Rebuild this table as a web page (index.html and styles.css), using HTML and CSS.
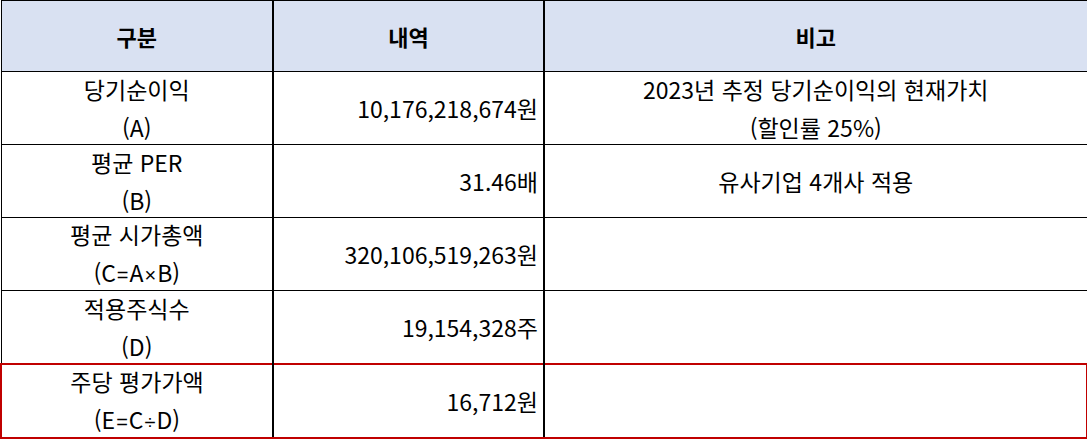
FILE: index.html
```html
<!DOCTYPE html>
<html lang="ko">
<head>
<meta charset="utf-8">
<link rel="stylesheet" href="styles.css">
</head>
<body>
<table class="grid">
  <colgroup>
    <col class="c1"><col class="c2"><col class="c3">
  </colgroup>
  <thead>
    <tr class="head">
      <th>구분</th>
      <th class="mid">내역</th>
      <th>비고</th>
    </tr>
  </thead>
  <tbody>
    <tr>
      <td class="label"><div class="two"><span>당기순이익</span><span>(A)</span></div></td>
      <td class="num mid">10,176,218,674원</td>
      <td class="note"><div class="two"><span>2023년 추정 당기순이익의 현재가치</span><span>(할인률 25%)</span></div></td>
    </tr>
    <tr>
      <td class="label"><div class="two"><span>평균 PER</span><span>(B)</span></div></td>
      <td class="num mid">31.46배</td>
      <td class="note">유사기업 4개사 적용</td>
    </tr>
    <tr>
      <td class="label"><div class="two"><span>평균 시가총액</span><span>(C<span class="op">=</span>A<span class="op">×</span>B)</span></div></td>
      <td class="num mid">320,106,519,263원</td>
      <td class="note"></td>
    </tr>
    <tr>
      <td class="label"><div class="two"><span>적용주식수</span><span>(D)</span></div></td>
      <td class="num mid">19,154,328주</td>
      <td class="note"></td>
    </tr>
    <tr class="total">
      <td class="label"><div class="two"><span>주당 평가가액</span><span>(E<span class="op">=</span>C<span class="op">÷</span>D)</span></div></td>
      <td class="num mid">16,712원</td>
      <td class="note"></td>
    </tr>
  </tbody>
</table>
</body>
</html>
```
FILE: styles.css
```css
html, body {
  margin: 0;
  padding: 0;
  background: #ffffff;
}
body {
  font-family: "Noto Sans CJK KR", "Noto Sans", sans-serif;
  color: #000000;
}
.grid {
  border-collapse: collapse;
  table-layout: fixed;
  width: 1086px;
}
.c1 { width: 272px; }
.c2 { width: 271px; }
.c3 { width: 543px; }
.grid th,
.grid td {
  border: 1px solid #000000;
  padding: 0;
  height: 72px;
  vertical-align: middle;
  font-size: 23px;
  line-height: 30px;
  font-weight: 400;
  overflow: hidden;
}
.two {
  display: flex;
  flex-direction: column;
  align-items: center;
  justify-content: center;
  gap: 8px;
  height: 72px;
}
.op {
  font-family: "Liberation Sans", sans-serif;
  font-size: 20px;
  padding: 0 1px;
}
.grid .mid {
  border-left: 2px solid #000000;
  border-right: 2px solid #000000;
}
.head th {
  background: #D9E1F2;
  font-weight: 700;
  font-size: 22px;
  text-align: center;
  height: 70px;
}
.label { text-align: center; }
.note { text-align: center; }
.num {
  text-align: right;
  padding-right: 5px !important;
}
.total td {
  border-top: 2px solid #C00000;
  border-bottom: 2px solid #C00000;
}
.total td.label { border-left: 2px solid #C00000; }
.total td.note { border-right: 2px solid #C00000; }
```
